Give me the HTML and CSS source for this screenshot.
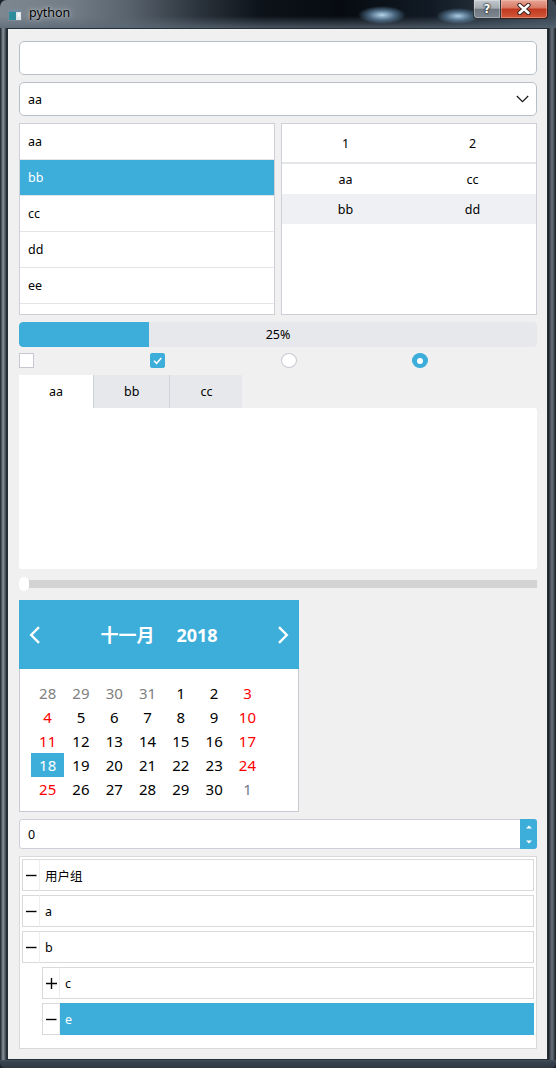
FILE: index.html
```html
<!DOCTYPE html>
<html>
<head>
<meta charset="utf-8">
<title>python</title>
<link rel="stylesheet" href="styles.css">
</head>
<body>
<div class="window">
  <div class="titlebar">
    <svg class="app-icon" width="14" height="12" viewBox="0 0 14 12">
      <rect x="0.5" y="0.5" width="13" height="11" fill="#dfe6ea" stroke="#7d8a95"/>
      <rect x="1" y="1" width="12" height="2" fill="#6f8ba3"/>
      <rect x="1" y="3" width="7" height="8" fill="#2e8d9a"/>
      <rect x="10" y="4" width="1.5" height="4" fill="#ffffff"/>
    </svg>
    <span class="title">python</span>
    <div class="caption">
      <div class="cap-btn help">?</div>
      <div class="cap-btn close">
        <svg width="14" height="12" viewBox="0 0 14 12">
          <path d="M2.5 2 L11.5 10 M11.5 2 L2.5 10" stroke="#3b2520" stroke-width="4.4" stroke-linecap="round"/>
          <path d="M2.5 2 L11.5 10 M11.5 2 L2.5 10" stroke="#ffffff" stroke-width="2.4" stroke-linecap="round"/>
        </svg>
      </div>
    </div>
  </div>

  <div class="client">
    <div class="lineedit"></div>

    <div class="combo">
      <span>aa</span>
      <svg width="13" height="8" viewBox="0 0 13 8"><path d="M0.8 1 L6.5 6.7 L12.2 1" fill="none" stroke="#1e1e1e" stroke-width="1.3"/></svg>
    </div>

    <div class="pair">
      <div class="list">
        <div class="item">aa</div>
        <div class="item selected">bb</div>
        <div class="item">cc</div>
        <div class="item">dd</div>
        <div class="item">ee</div>
      </div>
      <div class="table">
        <div class="thead"><span>1</span><span>2</span></div>
        <div class="trow"><span>aa</span><span>cc</span></div>
        <div class="trow alt"><span>bb</span><span>dd</span></div>
      </div>
    </div>

    <div class="progress">
      <div class="chunk" style="width:25%"></div>
      <span class="ptext">25%</span>
    </div>

    <div class="checks">
      <div class="cell"><span class="cb"></span></div>
      <div class="cell"><span class="cb on"><svg width="13" height="13" viewBox="0 0 13 13"><path d="M3 6.8 L5.6 9.3 L10.3 4" fill="none" stroke="#ffffff" stroke-width="1.5"/></svg></span></div>
      <div class="cell"><span class="rb"></span></div>
      <div class="cell"><span class="rb on"><span class="dot"></span></span></div>
    </div>

    <div class="tabs">
      <div class="tab active">aa</div>
      <div class="tab">bb</div>
      <div class="tab last">cc</div>
    </div>
    <div class="pane"></div>

    <div class="slider">
      <div class="groove"></div>
      <div class="handle"></div>
    </div>

    <div class="calendar">
      <div class="cal-head">
        <svg width="12" height="18" viewBox="0 0 12 18"><path d="M10 1.2 L2.2 9 L10 16.8" fill="none" stroke="#ffffff" stroke-width="2.4"/></svg>
        <div class="cal-title"><span>十一月</span><span>2018</span></div>
        <svg width="12" height="18" viewBox="0 0 12 18"><path d="M2 1.2 L9.8 9 L2 16.8" fill="none" stroke="#ffffff" stroke-width="2.4"/></svg>
      </div>
      <div class="cal-body">
        <div class="days">
          <span class="other">28</span><span class="other">29</span><span class="other">30</span><span class="other">31</span><span>1</span><span>2</span><span class="we">3</span>
          <span class="we">4</span><span>5</span><span>6</span><span>7</span><span>8</span><span>9</span><span class="we">10</span>
          <span class="we">11</span><span>12</span><span>13</span><span>14</span><span>15</span><span>16</span><span class="we">17</span>
          <span class="sel">18</span><span>19</span><span>20</span><span>21</span><span>22</span><span>23</span><span class="we">24</span>
          <span class="we">25</span><span>26</span><span>27</span><span>28</span><span>29</span><span>30</span><span class="other2">1</span>
        </div>
      </div>
    </div>

    <div class="spin">
      <span class="spin-text">0</span>
      <div class="spin-btns">
        <div class="sb"><svg width="6" height="4" viewBox="0 0 6 4"><path d="M0 3.5 L3 0.5 L6 3.5 Z" fill="#ffffff"/></svg></div>
        <div class="sb"><svg width="6" height="4" viewBox="0 0 6 4"><path d="M0 0.5 L3 3.5 L6 0.5 Z" fill="#ffffff"/></svg></div>
      </div>
    </div>

    <div class="tree">
      <div class="node">
        <div class="branch"><svg width="11" height="11" viewBox="0 0 11 11"><path d="M0 5.5 H10.5" stroke="#000" stroke-width="1.4"/></svg></div>
        <div class="label">用户组</div>
      </div>
      <div class="node">
        <div class="branch"><svg width="11" height="11" viewBox="0 0 11 11"><path d="M0 5.5 H10.5" stroke="#000" stroke-width="1.4"/></svg></div>
        <div class="label">a</div>
      </div>
      <div class="node">
        <div class="branch"><svg width="11" height="11" viewBox="0 0 11 11"><path d="M0 5.5 H10.5" stroke="#000" stroke-width="1.4"/></svg></div>
        <div class="label">b</div>
      </div>
      <div class="node child">
        <div class="branch"><svg width="11" height="11" viewBox="0 0 11 11"><path d="M0 5.5 H11 M5.5 0 V11" stroke="#000" stroke-width="1.4"/></svg></div>
        <div class="label">c</div>
      </div>
      <div class="node child selected">
        <div class="branch"><svg width="11" height="11" viewBox="0 0 11 11"><path d="M0 5.5 H10.5" stroke="#000" stroke-width="1.4"/></svg></div>
        <div class="label">e</div>
      </div>
    </div>
  </div>
</div>
</body>
</html>
```
FILE: styles.css
```css
* { box-sizing: border-box; margin: 0; padding: 0; }
html, body { width: 556px; height: 1068px; overflow: hidden; background: #1c232a; }
body {
  font-family: "Noto Sans", "Noto Sans CJK SC", sans-serif;
  font-size: 12.5px;
  color: #000;
}

.window {
  width: 556px;
  height: 1068px;
  display: flex;
  flex-direction: column;
  border-radius: 7px 7px 5px 5px;
  overflow: hidden;
  background:
    linear-gradient(180deg, #44505c 0, #36424e 2px, #2d3843 100%) left bottom / 100% 8px no-repeat,
    linear-gradient(90deg, #1b2127 0, #5d6770 2px, #8b949b 3px, #3a434c 6px, #11161b 7px, #11161b 548px, #2b333b 549px, #6a737c 552px, #2c343c 555px, #161b20 556px);
}

/* ---------- title bar ---------- */
.titlebar {
  height: 28px;
  flex: none;
  display: flex;
  align-items: flex-start;
  background:
    radial-gradient(ellipse 24px 9px at 382px 15px, rgba(190,225,248,0.95), rgba(130,180,220,0.5) 55%, rgba(0,0,0,0) 100%),
    radial-gradient(ellipse 22px 8px at 458px 16px, rgba(185,222,248,0.9), rgba(130,180,220,0.45) 55%, rgba(0,0,0,0) 100%),
    linear-gradient(180deg, rgba(0,0,0,0) 0, rgba(0,0,0,0) 16px, rgba(90,104,118,0.75) 28px),
    linear-gradient(90deg, #7d8790 0, #737d87 70px, #58626c 130px, #2a323b 200px, #0d131a 260px, #070b11 340px, #111a24 430px, #2b3845 510px, #3c4854 556px);
}
.app-icon { margin: 9px 0 0 8px; flex: none; }
.title {
  margin: 5px 0 0 7px;
  font-size: 12.5px;
  line-height: 16px;
  color: #000;
  text-shadow: 0 0 6px rgba(255,255,255,0.6), 0 0 2px rgba(255,255,255,0.5);
}
.caption {
  margin-left: auto;
  margin-right: 8px;
  display: flex;
  height: 19px;
}
.cap-btn {
  height: 19px;
  display: flex;
  align-items: center;
  justify-content: center;
}
.help {
  width: 28px;
  border: 1px solid #2d3339;
  border-top: none;
  border-radius: 0 0 0 4px;
  background: linear-gradient(180deg, #c3c9ce 0, #a3aab1 45%, #6f7880 52%, #7f8891 100%);
  box-shadow: inset 0 0 0 1px rgba(255,255,255,0.3);
  color: #fff;
  font-family: "DejaVu Sans", sans-serif;
  font-weight: bold;
  font-size: 12px;
  text-shadow: 0 0 1px #222, 0 0 2px #222, 0 0 2px #222;
}
.close {
  width: 47px;
  border: 1px solid #3a1e18;
  border-left: none;
  border-top: none;
  border-radius: 0 0 4px 0;
  background: linear-gradient(180deg, #e7a596 0, #d97a66 42%, #c13a20 52%, #d4583c 100%);
  box-shadow: inset 0 0 0 1px rgba(255,220,210,0.35);
}

/* ---------- client area ---------- */
.client {
  flex: 1;
  margin: 0 8px 8px 7px;
  background: #f0f0f0;
  border: 1px solid #252d35;
  padding: 12px 10px 0 11px;
  display: flex;
  flex-direction: column;
}

.lineedit {
  height: 34px;
  background: #fff;
  border: 1px solid #b7bec6;
  border-radius: 5px;
}

.combo {
  margin-top: 7px;
  height: 34px;
  background: #fff;
  border: 1px solid #b7bec6;
  border-radius: 5px;
  display: flex;
  align-items: center;
  justify-content: space-between;
  padding: 0 7px 0 8px;
}

.pair {
  margin-top: 7px;
  height: 192px;
  display: flex;
  gap: 6px;
}
.list, .table {
  width: 256px;
  background: #fff;
  border: 1px solid #cdd1d7;
  overflow: hidden;
}
.list .item {
  height: 36px;
  border-bottom: 1px solid #e3e4e7;
  padding-left: 8px;
  display: flex;
  align-items: center;
}
.list .item.selected {
  background: #3daeda;
  color: #fff;
}
.thead {
  height: 40px;
  border-bottom: 2px solid #e4e6ea;
  display: grid;
  grid-template-columns: 1fr 1fr;
  align-items: center;
  text-align: center;
}
.trow {
  height: 30px;
  display: grid;
  grid-template-columns: 1fr 1fr;
  align-items: center;
  text-align: center;
}
.trow.alt { background: #eff0f3; }

.progress {
  margin-top: 7px;
  height: 25px;
  background: #e6e8ec;
  border-radius: 4px;
  display: grid;
  overflow: hidden;
}
.chunk {
  grid-area: 1 / 1;
  background: #3daeda;
  border-radius: 4px 0 0 4px;
}
.ptext {
  grid-area: 1 / 1;
  justify-self: center;
  align-self: center;
}

.checks {
  margin-top: 6px;
  height: 15px;
  display: grid;
  grid-template-columns: repeat(4, 1fr);
  gap: 6px;
}
.cell { display: flex; }
.cb {
  width: 15px;
  height: 15px;
  background: #fff;
  border: 1px solid #c6cad0;
  display: flex;
  align-items: center;
  justify-content: center;
}
.cb.on {
  background: #3daeda;
  border-color: #3daeda;
  border-radius: 2px;
}
.rb {
  width: 16px;
  height: 15px;
  border-radius: 50%;
  background: #fff;
  border: 1px solid #c6cad0;
  display: flex;
  align-items: center;
  justify-content: center;
}
.rb.on {
  background: #3daeda;
  border-color: #3daeda;
}
.dot {
  width: 6px;
  height: 6px;
  border-radius: 50%;
  background: #fff;
}

.tabs {
  margin-top: 7px;
  height: 33px;
  display: flex;
}
.tab {
  padding: 0 30px;
  background: #e6e8ec;
  border-right: 1px solid #cfd3d9;
  display: flex;
  align-items: center;
}
.tab.last { border-right: none; padding: 0 30px; }
.tab.active { background: #fff; }
.pane {
  height: 161px;
  background: #fff;
  border-radius: 0 3px 3px 3px;
}

.slider {
  margin-top: 8px;
  height: 14px;
  display: grid;
}
.groove {
  grid-area: 1 / 1;
  align-self: center;
  height: 8px;
  background: #d3d3d3;
}
.handle {
  grid-area: 1 / 1;
  justify-self: start;
  width: 10px;
  height: 14px;
  border-radius: 5px;
  background: #fff;
}

.calendar {
  margin-top: 9px;
  width: 280px;
}
.cal-head {
  height: 69px;
  background: #3daeda;
  display: flex;
  align-items: center;
  justify-content: space-between;
  padding: 0 10px;
}
.cal-title {
  display: flex;
  gap: 22px;
  color: #fff;
  font-weight: bold;
  font-size: 18px;
  line-height: 24px;
  margin-top: 1px;
}
.cal-body {
  height: 143px;
  background: #fff;
  border: 1px solid #c6cbd2;
  border-top: none;
  padding: 12px 0 0 11px;
}
.days {
  display: grid;
  grid-template-columns: repeat(7, 33.3px);
  grid-auto-rows: 24px;
  font-size: 15px;
}
.days span {
  display: flex;
  align-items: center;
  justify-content: center;
  color: #000;
}
.days .other { color: #808080; }
.days .other2 { color: #707a88; }
.days .we { color: #ff0000; }
.days .sel { background: #3daeda; color: #fff; }

.spin {
  margin-top: 7px;
  height: 30px;
  background: #fff;
  border: 1px solid #cdd1d7;
  border-radius: 3px;
  display: flex;
  align-items: center;
}
.spin-text { padding-left: 8px; }
.spin-btns {
  margin: -1px -1px -1px auto;
  align-self: stretch;
  width: 17px;
  background: #3daeda;
  border-radius: 0 3px 3px 0;
  display: flex;
  flex-direction: column;
}
.sb {
  flex: 1;
  display: flex;
  align-items: center;
  justify-content: center;
}

.tree {
  margin-top: 7px;
  height: 193px;
  background: #fff;
  border: 1px solid #d9d9d9;
  padding: 2px;
  display: flex;
  flex-direction: column;
  gap: 4px;
}
.node {
  height: 32px;
  display: flex;
}
.node.child { margin-left: 20px; }
.branch {
  width: 18px;
  border: 1px solid #d9d9d9;
  border-right: 1px solid #eeeeee;
  display: flex;
  align-items: center;
  padding-left: 3px;
}
.label {
  flex: 1;
  border: 1px solid #d9d9d9;
  border-left: none;
  padding-left: 5px;
  display: flex;
  align-items: center;
}
.node.selected .label {
  background: #3daeda;
  border-color: #3daeda;
  color: #fff;
}
```
